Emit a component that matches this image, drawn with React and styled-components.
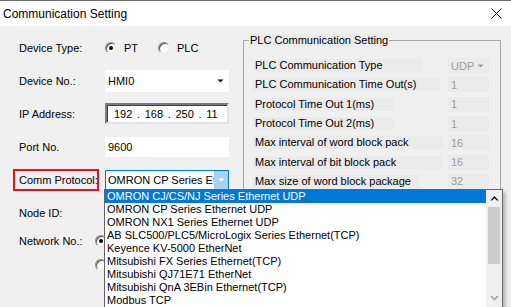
import React from "react";
import styled, { createGlobalStyle } from "styled-components";

const Global = createGlobalStyle`
	html, body { margin: 0; padding: 0; background: #f0f0f0; }
	body { font-family: "Liberation Sans", Arial, sans-serif; font-size: 11px; color: #000; }
`;

const Window = styled.div`
	width: 511px;
	height: 307px;
	overflow: hidden;
	background: #f0f0f0;
	border-top: 1px solid #6f6f6f;
	box-sizing: border-box;
	display: flex;
	flex-direction: column;
`;

const TitleBar = styled.div`
	height: 25px;
	background: #fff;
	display: flex;
	align-items: center;
	justify-content: space-between;
	padding: 0 9px 0 3px;
	flex-shrink: 0;
`;

const Title = styled.span`
	font-size: 12px;
`;

const Body = styled.div`
	flex: 1;
	display: flex;
`;

const Form = styled.div`
	width: 243px;
	flex-shrink: 0;
	padding: 5px 0 0 19px;
	box-sizing: border-box;
`;

const Row = styled.div`
	height: 33px;
	display: flex;
	align-items: ${p => (p.$top ? "flex-start" : "center")};
`;

const Label = styled.div`
	width: ${p => p.$w || 86}px;
	flex-shrink: 0;
	box-sizing: border-box;
	white-space: nowrap;
	line-height: ${p => (p.$top ? "24px" : "normal")};
	${p =>
		p.$highlight &&
		`
		border: 2px solid #e3141f;
		height: 22px;
		margin: 0 6px 0 -6px;
		padding-left: 4px;
		display: flex;
		align-items: center;
	`}
`;

const RadioGroup = styled.div`
	display: flex;
	flex-direction: ${p => (p.$column ? "column" : "row")};
	gap: ${p => (p.$column ? "12px" : "0")};
	padding-top: ${p => (p.$column ? "6px" : "0")};
`;

const RadioItem = styled.label`
	display: flex;
	align-items: center;
	width: ${p => p.$w || 50}px;
`;

const RadioDot = styled.span`
	width: 12px;
	height: 12px;
	box-sizing: border-box;
	border-radius: 50%;
	border: 1px solid;
	border-color: #8a8a8a #e6e6e6 #e6e6e6 #8a8a8a;
	background: #fff;
	box-shadow: inset 1px 1px 0 #555;
	display: inline-flex;
	align-items: center;
	justify-content: center;
	margin-right: 7px;
	flex-shrink: 0;

	&::after {
		content: "";
		width: 4px;
		height: 4px;
		border-radius: 50%;
		background: ${p => (p.$on ? "#000" : "transparent")};
	}
`;

const Field = styled.div`
	position: relative;
	width: 124px;
	height: ${p => p.$h || 20}px;
	box-sizing: border-box;
	background: #fff;
	display: flex;
	align-items: center;
	padding-left: 3px;
	white-space: nowrap;
	${p => p.$focus && "border: 1px solid #0078d7; padding-left: 2px;"}
`;

const SunkenField = styled(Field)`
	border: 2px solid;
	border-color: #7a7a7a #e3e3e3 #e3e3e3 #7a7a7a;
	box-shadow: inset 1px 1px 0 #404040;
	padding-left: 7px;
	word-spacing: 1.6px;
`;

const FieldText = styled.span`
	flex: 1;
	overflow: hidden;
`;

const ArrowBox = styled.span`
	width: ${p => (p.$blue ? 14 : 17)}px;
	align-self: stretch;
	display: flex;
	align-items: center;
	justify-content: center;
	background: ${p => (p.$blue ? "#a9d1f1" : "transparent")};
	flex-shrink: 0;
`;

const Triangle = ({ color = "#000" }) => (
	<svg width="7" height="4" viewBox="0 0 7 4">
		<path d="M0.5 0.5 H6.5 L3.5 3.5 Z" fill={color} />
	</svg>
);

const DropList = styled.div`
	position: absolute;
	top: 100%;
	left: -2px;
	width: 399px;
	height: 119px;
	box-sizing: border-box;
	border: 1px solid #646464;
	background: #fff;
	display: flex;
	box-shadow: 3px 3px 3px rgba(0, 0, 0, 0.22);
	z-index: 5;
`;

const Items = styled.div`
	flex: 1;
`;

const Item = styled.div`
	height: 13px;
	line-height: 13px;
	padding-left: 2px;
	white-space: nowrap;
	background: ${p => (p.$active ? "#0078d7" : "#fff")};
	color: ${p => (p.$active ? "#fff" : "#000")};
`;

const ScrollBar = styled.div`
	width: 16px;
	background: #f0f0f0;
	display: flex;
	flex-direction: column;
	align-items: center;
`;

const ScrollBtn = styled.div`
	height: 17px;
	width: 100%;
	display: flex;
	align-items: center;
	justify-content: center;
	flex-shrink: 0;
`;

const Thumb = styled.div`
	width: 12px;
	height: 57px;
	background: #cdcdcd;
`;

const Track = styled.div`
	flex: 1;
`;

const Group = styled.fieldset`
	margin: 8px 0 0 0;
	padding: 9px 11px 0 9px;
	width: 258px;
	height: 300px;
	box-sizing: border-box;
	border: 1px solid #a5a5a5;
	min-width: 0;
`;

const Legend = styled.legend`
	padding: 0 1px;
	margin-left: -4px;
	background: #ebebeb;
	line-height: 13px;
`;

const ParamRow = styled.div`
	height: 19.3px;
	display: flex;
	align-items: center;
	justify-content: space-between;
`;

const ParamLabel = styled.span`
	width: ${p => p.$w}px;
	height: 13px;
	line-height: 13px;
	padding-left: 2px;
	box-sizing: border-box;
	background: #ebebeb;
	white-space: nowrap;
`;

const ParamValue = styled.span`
	width: 41px;
	height: 15px;
	box-sizing: border-box;
	background: #ebebeb;
	color: #9b9b9b;
	display: flex;
	align-items: center;
	justify-content: space-between;
	padding: 0 5px 0 3px;
`;

const Radio = ({ on, children, w }) => (
	<RadioItem $w={w}>
		<RadioDot $on={on} />
		{children}
	</RadioItem>
);

const protocols = [
	"OMRON CJ/CS/NJ Series Ethernet UDP",
	"OMRON CP Series Ethernet UDP",
	"OMRON NX1 Series Ethernet UDP",
	"AB SLC500/PLC5/MicroLogix Series Ethernet(TCP)",
	"Keyence KV-5000 EtherNet",
	"Mitsubishi FX Series Ethernet(TCP)",
	"Mitsubishi QJ71E71 EtherNet",
	"Mitsubishi QnA 3EBin Ethernet(TCP)",
	"Modbus TCP",
];

const params = [
	{ label: "PLC Communication Type", w: 169, value: "UDP", combo: true },
	{ label: "PLC Communication Time Out(s)", w: 187, value: "1" },
	{ label: "Protocol Time Out 1(ms)", w: 141, value: "1" },
	{ label: "Protocol Time Out 2(ms)", w: 141, value: "1" },
	{ label: "Max interval of word block pack", w: 190, value: "16" },
	{ label: "Max interval of bit block pack", w: 189, value: "16" },
	{ label: "Max size of word block package", w: 166, value: "32" },
];

const App = () => (
	<>
		<Global />
		<Window>
			<TitleBar>
				<Title>Communication Setting</Title>
				<svg width="11" height="11" viewBox="0 0 11 11">
					<path d="M0.5 0.5 L10.5 10.5 M10.5 0.5 L0.5 10.5" stroke="#000" strokeWidth="1" />
				</svg>
			</TitleBar>
			<Body>
				<Form>
					<Row>
						<Label>Device Type:</Label>
						<RadioGroup>
							<Radio on w={53}>PT</Radio>
							<Radio>PLC</Radio>
						</RadioGroup>
					</Row>
					<Row>
						<Label>Device No.:</Label>
						<Field $h={22}>
							<FieldText>HMI0</FieldText>
							<ArrowBox><Triangle /></ArrowBox>
						</Field>
					</Row>
					<Row>
						<Label>IP Address:</Label>
						<SunkenField $h={21}>192 . 168 . 250 . 11</SunkenField>
					</Row>
					<Row>
						<Label>Port No.</Label>
						<Field>9600</Field>
					</Row>
					<Row>
						<Label $highlight>Comm Protocol:</Label>
						<Field $focus>
							<FieldText>OMRON CP Series Ethernet UDP</FieldText>
							<ArrowBox $blue><Triangle color="#fff" /></ArrowBox>
							<DropList>
								<Items>
									{protocols.map((p, i) => (
										<Item key={p} $active={i === 0}>{p}</Item>
									))}
								</Items>
								<ScrollBar>
									<ScrollBtn>
										<svg width="9" height="6" viewBox="0 0 9 6">
											<path d="M0.5 5.5 L4.5 1 L8.5 5.5 L7 5.5 L4.5 3 L2 5.5 Z" fill="#000" />
										</svg>
									</ScrollBtn>
									<Thumb />
									<Track />
									<ScrollBtn>
										<svg width="9" height="6" viewBox="0 0 9 6">
											<path d="M1 1 L4.5 4.5 L8 1" stroke="#9a9a9a" strokeWidth="1.4" fill="none" />
										</svg>
									</ScrollBtn>
								</ScrollBar>
							</DropList>
						</Field>
					</Row>
					<Row>
						<Label>Node ID:</Label>
						<Field />
					</Row>
					<Row $top>
						<Label $w={76} $top>Network No.:</Label>
						<RadioGroup $column>
							<Radio on />
							<Radio />
						</RadioGroup>
					</Row>
				</Form>
				<Group>
					<Legend>PLC Communication Setting</Legend>
					{params.map(p => (
						<ParamRow key={p.label}>
							<ParamLabel $w={p.w}>{p.label}</ParamLabel>
							<ParamValue>
								{p.value}
								{p.combo && <Triangle color="#9b9b9b" />}
							</ParamValue>
						</ParamRow>
					))}
				</Group>
			</Body>
		</Window>
	</>
);

export default App;
